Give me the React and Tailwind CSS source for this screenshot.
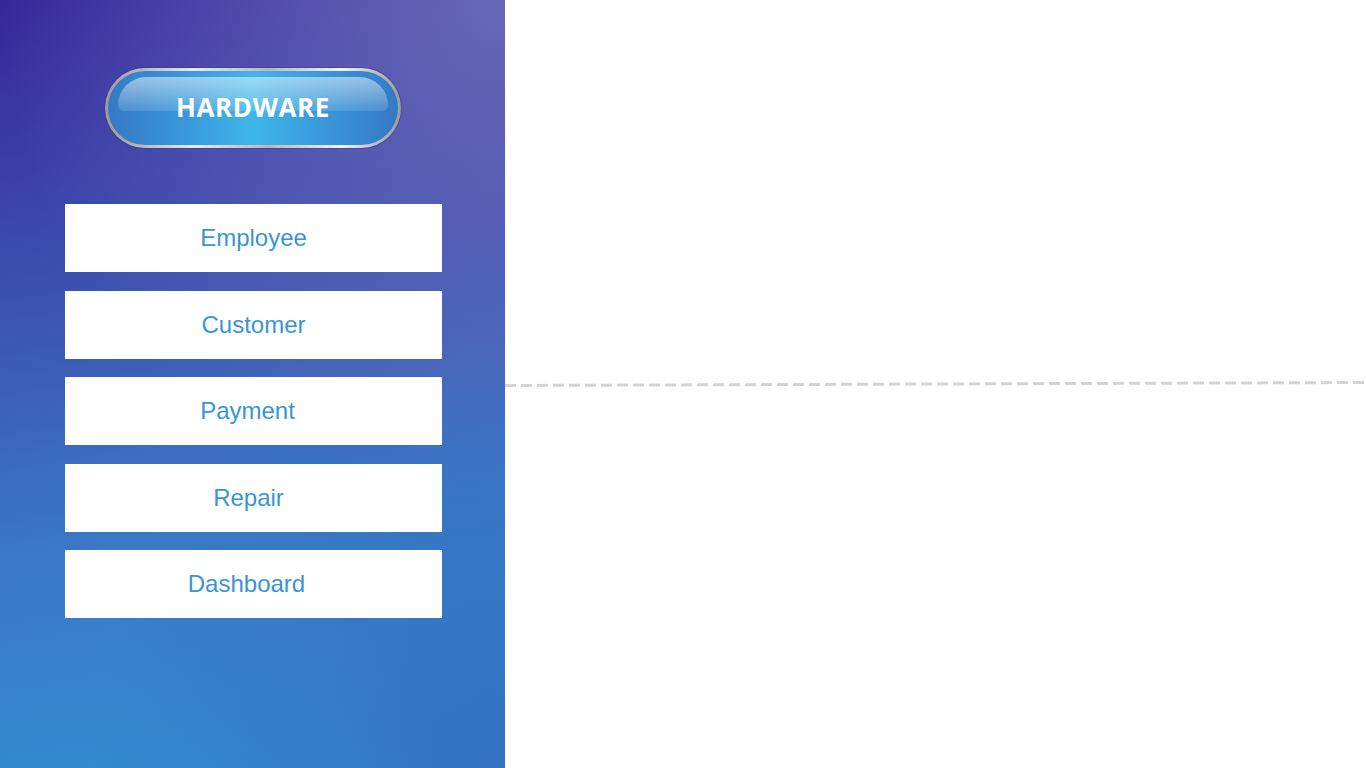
import React from "react";

const items = [
  { label: "Employee", cls: "pl-0" },
  { label: "Customer", cls: "pl-0" },
  { label: "Payment", cls: "pr-[12px]" },
  { label: "Repair", cls: "pr-[10px]" },
  { label: "Dashboard", cls: "pr-[14px]" },
];

export default function App() {
  return (
    <div className="flex w-[1366px] h-[768px] overflow-hidden bg-white font-['Liberation_Sans',Arial,sans-serif]">
      <aside className="w-[505px] h-full shrink-0 flex flex-col items-center bg-[radial-gradient(circle_at_100%_0%,#6868b8_0%,rgba(104,104,184,0)_55%),radial-gradient(circle_at_100%_100%,rgba(50,110,190,0.9)_0%,rgba(50,110,190,0)_45%),linear-gradient(170deg,#38269a_0%,#3c52b0_35%,#3a78c6_65%,#3391d1_100%)]">
        <div className="mt-[68px] ml-[1px] w-[296px] h-[80px] rounded-full p-[3px] bg-[linear-gradient(90deg,#9a9a9a_0%,#e8e8e8_30%,#b8b8b8_55%,#f2f2f2_80%,#9c9c9c_100%)] shadow-[0_0_0_1px_rgba(60,40,140,0.4)]">
          <div className="relative w-full h-full rounded-full overflow-hidden bg-[linear-gradient(90deg,#3479c4_0%,#3a9ddd_30%,#3fb6e9_50%,#3a9ddd_70%,#3479c4_100%)] flex items-center justify-center">
            <div className="absolute left-[10px] right-[10px] top-[6px] h-[34px] rounded-t-[40px] rounded-b-[8px] bg-[linear-gradient(180deg,rgba(255,255,255,0.5)_0%,rgba(255,255,255,0.12)_100%)]" />
            <span className="relative text-white font-bold text-[26px] tracking-[0.6px] font-['Open_Sans',sans-serif] leading-none mt-[-2px]">
              HARDWARE
            </span>
          </div>
        </div>
        <nav className="mt-[56px] ml-[2px] flex flex-col gap-[18.5px]">
          {items.map((it) => (
            <div
              key={it.label}
              className={`w-[377px] h-[68px] bg-white flex items-center justify-center text-[#3a95d5] text-[24px] ${it.cls}`}
            >
              {it.label}
            </div>
          ))}
        </nav>
      </aside>
      <main className="flex-1 relative">
        <svg className="absolute left-0 top-0" width="861" height="768">
          <line x1="0" y1="385.5" x2="861" y2="382.5" stroke="#d4d4d4" strokeWidth="3" strokeDasharray="11 5" />
        </svg>
      </main>
    </div>
  );
}
